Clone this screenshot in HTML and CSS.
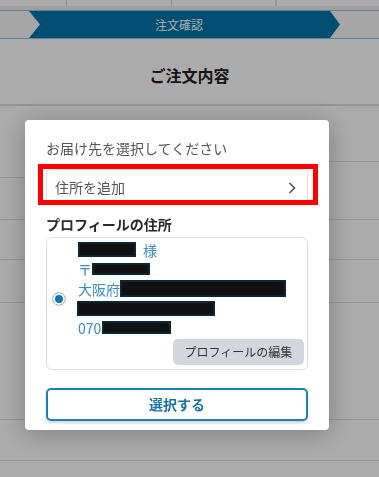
FILE: index.html
```html
<!DOCTYPE html>
<html lang="ja">
<head>
	<meta charset="UTF-8" />
	<title>ご注文内容</title>
	<link rel="stylesheet" href="styles.css">
</head>
<body>

<div class="tabs">
	<div class="tab tab1"></div>
	<div class="tab tab2"></div>
	<div class="tab tab3"></div>
	<div class="tab"></div>
</div>
<div class="tabsGap"></div>

<div class="steps">
	<div class="stepCurrent">注文確認</div>
</div>

<div class="pageTitle">ご注文内容</div>

<div class="rowSplit">
	<div class="cellLeft"><div class="cellLeftTop"></div></div>
	<div class="cellRight"><div class="cellRightTop"></div></div>
</div>
<div class="row rowB"></div>
<div class="row rowC"></div>
<div class="row rowD"></div>
<div class="row rowE"></div>
<div class="row rowF"></div>

<div class="overlay"></div>

<div class="modal">
	<div class="modalLabel">お届け先を選択してください</div>

	<div class="addAddress">
		<span>住所を追加</span>
		<svg class="chevron" width="8" height="12" viewBox="0 0 8 12">
			<polyline points="1.5,1 6.5,6 1.5,11" fill="none" stroke="#555" stroke-width="1.6" />
		</svg>
		<div class="mark"></div>
	</div>

	<div class="sectionTitle">プロフィールの住所</div>

	<div class="card">
		<div class="radio"></div>
		<div class="address">
			<div class="line"><span class="redact r1"></span><span class="honor">様</span></div>
			<div class="line">〒<span class="redact r2"></span></div>
			<div class="line">大阪府<span class="redact r3"></span></div>
			<div class="line"><span class="redact r4"></span></div>
			<div class="line">070<span class="redact r5"></span></div>
			<div class="editBtn">プロフィールの編集</div>
		</div>
	</div>

	<div class="selectBtn">選択する</div>
</div>

</body>
</html>
```

FILE: styles.css
```css
	body {
		margin:0;
		width:379px;
		height:477px;
		overflow:hidden;
		background:#fff;
		font-family:"Noto Sans CJK JP", "Noto Sans", sans-serif;
		color:#222;
	}

	/* barre d'onglets coupée en haut */
	.tabs {
		display:flex;
		height:6px;
		background:#fff;
	}
	.tab { border-right:1px solid #ddd; }
	.tab1 { width:66px; }
	.tab2 { width:104px; }
	.tab3 { width:103px; }
	.tabsGap {
		height:4px;
		background:#eee;
	}

	.steps {
		height:27px;
		border-top:1px solid #8ec3e3;
		border-bottom:1px solid #8ec3e3;
		background:#f6f6f6;
	}
	.stepCurrent {
		margin-left:29px;
		width:311px;
		height:27px;
		box-sizing:border-box;
		padding-right:11px;
		background:#0077aa;
		clip-path:polygon(0 0, 301px 0, 100% 50%, 301px 100%, 0 100%, 11px 50%);
		color:#fff;
		font-size:12px;
		line-height:27px;
		text-align:center;
	}

	.pageTitle {
		padding:26px 0 19px;
		line-height:20px;
		font-size:16px;
		font-weight:bold;
		text-align:center;
		border-bottom:2px solid #dedede;
	}

	.rowSplit {
		display:flex;
		height:113px;
		border-bottom:1px solid #dedede;
	}
	.cellLeft, .cellRight { flex:1; }
	.cellLeftTop {
		height:71px;
		border-bottom:1px solid #dedede;
	}
	.cellRightTop {
		height:55px;
		border-bottom:1px solid #dedede;
	}
	.row { border-bottom:1px solid #dedede; }
	.rowB { height:39px; }
	.rowC { height:42px; }
	.rowD { height:116px; }
	.rowE { height:40px; }
	.rowF { height:30px; }

	.overlay {
		position:fixed;
		left:0; top:0; right:0; bottom:0;
		background:rgba(0,0,0,0.33);
	}

	.modal {
		position:fixed;
		left:25px;
		top:120px;
		width:304px;
		box-sizing:border-box;
		padding:18px 21px 9px;
		background:#fff;
		border-radius:4px;
		box-shadow:0 3px 26px rgba(0,0,0,0.28);
	}
	.modalLabel {
		font-size:14px;
		line-height:20px;
		color:#555;
	}

	.addAddress {
		position:relative;
		margin-top:11px;
		height:36px;
		box-sizing:border-box;
		border:1px solid #ddd;
		border-radius:4px;
		padding:0 11px 0 8px;
		display:flex;
		align-items:center;
		justify-content:space-between;
		font-size:14px;
		color:#555;
	}
	.chevron { margin-top:1px; }
	/* cadre rouge d'annotation */
	.mark {
		position:absolute;
		left:-9px; right:-11px;
		top:-6px; bottom:-1px;
		border:5px solid #f00;
	}

	.sectionTitle {
		margin-top:9px;
		font-size:14px;
		line-height:20px;
		font-weight:bold;
		color:#2a2a2a;
	}

	.card {
		margin-top:3px;
		display:flex;
		border:1px solid #ddd;
		border-radius:6px;
		padding:2px 3px 4px 5px;
	}
	.radio {
		flex:none;
		width:14px;
		height:14px;
		box-sizing:border-box;
		margin-top:52px;
		margin-right:12px;
		border:1px solid #ccc;
		border-radius:50%;
		background:#0b76b8;
		box-shadow:inset 0 0 0 2px #fff;
	}
	.address {
		flex:1;
		display:flex;
		flex-direction:column;
		font-size:14px;
		color:#3a8dc0;
	}
	.line {
		display:flex;
		align-items:center;
		height:19.5px;
		white-space:nowrap;
	}
	.redact {
		display:inline-block;
		box-sizing:border-box;
		background:#111;
		border:2px solid #0b2634;
	}
	.r1 { width:58px; height:15px; }
	.r2 { width:58px; height:12px; }
	.r3 { width:166px; height:17px; }
	.r4 { width:138px; height:15px; margin-left:-1px; }
	.r5 { width:69px; height:13px; margin-left:1px; }
	.honor { margin-left:7px; }

	.editBtn {
		align-self:flex-end;
		margin-top:1.5px;
		width:131px;
		height:26px;
		line-height:26px;
		text-align:center;
		background:#d3d6db;
		border-radius:5px;
		font-size:12px;
		color:#333;
	}

	.selectBtn {
		margin-top:18px;
		height:33px;
		box-sizing:border-box;
		border:2px solid #1a80b6;
		border-radius:5px;
		box-shadow:0 2px 3px rgba(0,0,0,0.18);
		text-align:center;
		line-height:29px;
		font-size:14px;
		font-weight:bold;
		color:#1a72a6;
	}
```
